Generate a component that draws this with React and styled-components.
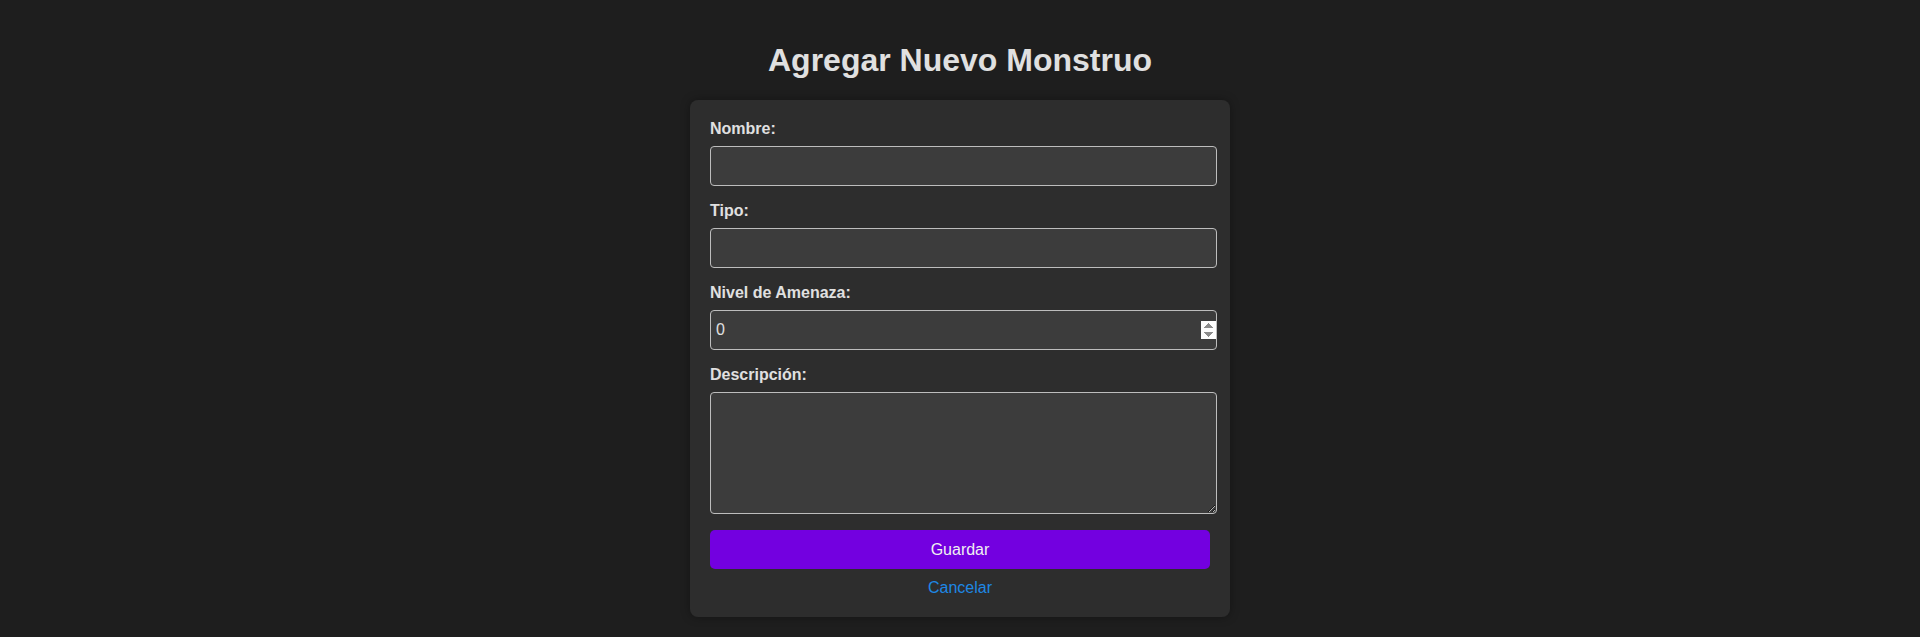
import styled, { createGlobalStyle } from 'styled-components';

const GlobalStyle = createGlobalStyle`
  body {
    margin: 0;
    background: #1e1e1e;
    font-family: "Liberation Sans", Arial, sans-serif;
    color: #e0e0e0;
  }
`;

const Page = styled.div`
  padding: 20px;
  display: flex;
  flex-direction: column;
  align-items: center;
`;

const Title = styled.h1`
  font-size: 32px;
  font-weight: bold;
  margin: 22px 0 21px;
  color: #e0e0e0;
`;

const Card = styled.form`
  width: 500px;
  padding: 20px;
  background: #2d2d2d;
  border-radius: 8px;
  box-shadow: 0 0 10px rgba(0, 0, 0, 0.35);
`;

const Field = styled.div`
  margin-bottom: 16px;
`;

const Label = styled.label`
  display: block;
  font-size: 16px;
  font-weight: bold;
  line-height: 18px;
  margin-bottom: 8px;
  color: #e0e0e0;
`;

const Input = styled.input`
  display: block;
  box-sizing: border-box;
  width: 507px;
  height: 40px;
  padding: 10px 0 10px 5px;
  background: #3c3c3c;
  border: 1px solid #bdbdbd;
  border-radius: 4px;
  color: #e0e0e0;
  font-family: "Liberation Sans", Arial, sans-serif;
  font-size: 16px;
  outline: none;

  &::-webkit-inner-spin-button {
    opacity: 1;
  }
`;

const TextArea = styled.textarea`
  display: block;
  box-sizing: border-box;
  width: 507px;
  height: 122px;
  padding: 10px 5px;
  background: #3c3c3c;
  border: 1px solid #bdbdbd;
  border-radius: 4px;
  color: #e0e0e0;
  font-family: "Liberation Sans", Arial, sans-serif;
  font-size: 16px;
  outline: none;
`;

const SaveButton = styled.button`
  display: block;
  width: 100%;
  height: 39px;
  border: none;
  border-radius: 5px;
  background: #7300e0;
  color: #f0f0f0;
  font-family: "Liberation Sans", Arial, sans-serif;
  font-size: 16px;
  cursor: pointer;
`;

const CancelLink = styled.a`
  display: block;
  margin-top: 10px;
  text-align: center;
  font-size: 16px;
  line-height: 18px;
  color: #1e88e5;
  text-decoration: none;
  cursor: pointer;
`;

export default function App() {
  return (
    <>
      <GlobalStyle />
      <Page>
        <Title>Agregar Nuevo Monstruo</Title>
        <Card onSubmit={(e) => e.preventDefault()}>
          <Field>
            <Label htmlFor="nombre">Nombre:</Label>
            <Input id="nombre" type="text" />
          </Field>
          <Field>
            <Label htmlFor="tipo">Tipo:</Label>
            <Input id="tipo" type="text" />
          </Field>
          <Field>
            <Label htmlFor="nivel">Nivel de Amenaza:</Label>
            <Input id="nivel" type="number" defaultValue="0" />
          </Field>
          <Field>
            <Label htmlFor="descripcion">Descripción:</Label>
            <TextArea id="descripcion" />
          </Field>
          <SaveButton type="submit">Guardar</SaveButton>
          <CancelLink>Cancelar</CancelLink>
        </Card>
      </Page>
    </>
  );
}
